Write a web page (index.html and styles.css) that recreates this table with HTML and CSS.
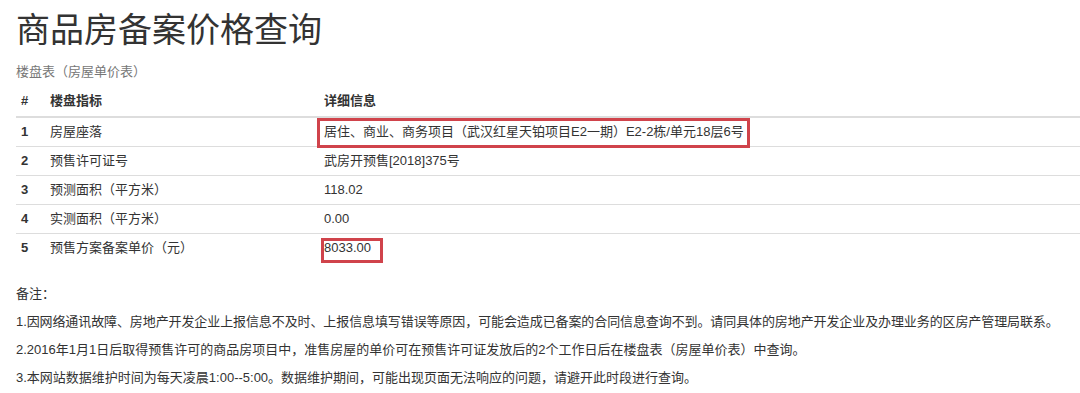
FILE: index.html
```html
<!DOCTYPE html>
<html lang="zh-CN">
<head>
<meta charset="utf-8">
<title>商品房备案价格查询</title>
<link rel="stylesheet" href="styles.css">
</head>
<body>
<main class="page">
  <h1 class="title">商品房备案价格查询</h1>
  <p class="subtitle">楼盘表（房屋单价表）</p>
  <table class="info">
    <colgroup>
      <col class="c-num">
      <col class="c-name">
      <col class="c-val">
    </colgroup>
    <thead>
      <tr><th>#</th><th>楼盘指标</th><th>详细信息</th></tr>
    </thead>
    <tbody>
      <tr><td class="num">1</td><td>房屋座落</td><td><span class="mark mark-wide">居住、商业、商务项目（武汉红星天铂项目E2一期）E2-2栋/单元18层6号</span></td></tr>
      <tr><td class="num">2</td><td>预售许可证号</td><td>武房开预售[2018]375号</td></tr>
      <tr><td class="num">3</td><td>预测面积（平方米）</td><td>118.02</td></tr>
      <tr><td class="num">4</td><td>实测面积（平方米）</td><td>0.00</td></tr>
      <tr><td class="num">5</td><td>预售方案备案单价（元）</td><td><span class="mark mark-price">8033.00</span></td></tr>
    </tbody>
  </table>
  <section class="notes">
    <p class="note-head">备注：</p>
    <p class="note note-wide">1.因网络通讯故障、房地产开发企业上报信息不及时、上报信息填写错误等原因，可能会造成已备案的合同信息查询不到。请同具体的房地产开发企业及办理业务的区房产管理局联系。</p>
    <p class="note">2.2016年1月1日后取得预售许可的商品房项目中，准售房屋的单价可在预售许可证发放后的2个工作日后在楼盘表（房屋单价表）中查询。</p>
    <p class="note">3.本网站数据维护时间为每天凌晨1:00--5:00。数据维护期间，可能出现页面无法响应的问题，请避开此时段进行查询。</p>
  </section>
</main>
</body>
</html>
```

FILE: styles.css
```css
html, body {
  margin: 0;
  padding: 0;
  background: #ffffff;
}

body {
  font-family: "Liberation Sans", "Noto Sans CJK SC", sans-serif;
  font-size: 13px;
  color: #333333;
  text-spacing-trim: space-all;
}

.page {
  padding: 8px 0 0 16px;
  overflow: hidden;
}

.title {
  margin: 0;
  font-size: 34px;
  line-height: 44px;
  font-weight: 400;
  color: #333333;
}

.subtitle {
  margin: 11px 0 0 0;
  font-size: 13px;
  line-height: 18px;
  color: #777777;
}

.info {
  width: 100%;
  margin-top: 6px;
  border-collapse: collapse;
  table-layout: fixed;
}

.c-num { width: 29px; }
.c-name { width: 274px; }

.info th,
.info td {
  padding: 5px 5px;
  line-height: 18px;
  text-align: left;
  vertical-align: middle;
  white-space: nowrap;
}

.info th {
  font-weight: 700;
  padding-bottom: 6px;
  border-bottom: 2px solid #dddddd;
}

.info tbody tr + tr td {
  border-top: 1px solid #dddddd;
}

.info td.num {
  font-weight: 700;
}

.mark {
  position: relative;
  display: inline-block;
  vertical-align: top;
}

.mark::after {
  content: "";
  position: absolute;
  border: 3px solid #d0434b;
  pointer-events: none;
}

.mark-wide::after {
  left: -7px;
  right: -6px;
  top: -5px;
  bottom: -7px;
}

.mark-price::after {
  left: -3px;
  right: -12px;
  top: -1px;
  bottom: -6px;
}

.notes {
  margin-top: 23px;
}

.notes p {
  margin: 0;
  line-height: 18px;
}

.notes .note {
  margin-top: 10px;
}

.note-wide {
  white-space: nowrap;
  letter-spacing: -0.1px;
}
```
